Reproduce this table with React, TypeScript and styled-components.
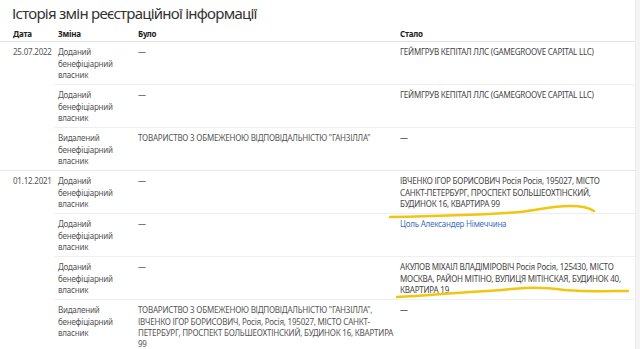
import React from "react";
import styled, { createGlobalStyle } from "styled-components";

const GlobalStyle = createGlobalStyle`
  html, body {
    margin: 0;
    padding: 0;
    background: #fff;
  }
  body {
    font-family: "Noto Sans", "Open Sans", sans-serif;
    color: #555;
    overflow: hidden;
  }
`;

const Page = styled.div`
  display: flex;
  width: 640px;
  height: 349px;
  overflow: hidden;
`;

const Content = styled.div`
  position: relative;
  width: 635px;
  flex-shrink: 0;
`;

const Gutter = styled.div`
  flex: 1;
  background: #f4f4f4;
  border-left: 1px solid #ececec;
`;

const Title = styled.h1`
  margin: 0;
  padding: 3px 12px 0;
  height: 26px;
  box-sizing: border-box;
  font-size: 15px;
  line-height: 20px;
  font-weight: 400;
  letter-spacing: -0.75px;
  color: #333;
`;

const Table = styled.table`
  width: 100%;
  border-collapse: collapse;
  table-layout: fixed;
  font-size: 8px;
  line-height: 11.3px;
  letter-spacing: -0.22px;
`;

const Th = styled.th`
  text-align: left;
  font-weight: 700;
  color: #222;
  padding: 2px 4px 2px;
  height: 11px;
  border-bottom: 1px solid #e3e3e3;
  &:first-child {
    padding-left: 13px;
  }
`;

const DateCell = styled.td`
  vertical-align: top;
  padding: 4px 0 4px 13px;
  white-space: nowrap;
  border-bottom: 1px solid #e8e8e8;
`;

const Td = styled.td<{ $last?: boolean; $dark?: boolean }>`
  vertical-align: top;
  padding: 4px ${({ $dark }) => ($dark ? "12px" : "1px")} 4px 4px;
  color: ${({ $dark }) => ($dark ? "#444" : "#555")};
  border-bottom: 1px solid ${({ $last }) => ($last ? "#e8e8e8" : "#efefef")};
  height: 34px;
`;

const Link = styled.a`
  color: #3d6fc2;
  text-decoration: none;
`;

const Marks = styled.svg`
  position: absolute;
  left: 0;
  top: 0;
  pointer-events: none;

  path {
    fill: none;
    stroke: #f2c511;
    stroke-width: 2.5;
    stroke-linecap: round;
  }
`;

interface Change {
  kind: string;
  before: React.ReactNode;
  after: React.ReactNode;
}

interface Group {
  date: string;
  changes: Change[];
}

const DASH = "—";

const groups: Group[] = [
  {
    date: "25.07.2022",
    changes: [
      { kind: "Доданий бенефіціарний власник", before: DASH, after: "ГЕЙМГРУВ КЕПІТАЛ ЛЛС (GAMEGROOVE CAPITAL LLC)" },
      { kind: "Доданий бенефіціарний власник", before: DASH, after: "ГЕЙМГРУВ КЕПІТАЛ ЛЛС (GAMEGROOVE CAPITAL LLC)" },
      { kind: "Видалений бенефіціарний власник", before: "ТОВАРИСТВО З ОБМЕЖЕНОЮ ВІДПОВІДАЛЬНІСТЮ \"ГАНЗІЛЛА\"", after: DASH },
    ],
  },
  {
    date: "01.12.2021",
    changes: [
      {
        kind: "Доданий бенефіціарний власник",
        before: DASH,
        after: "ІВЧЕНКО ІГОР БОРИСОВИЧ Росія Росія, 195027, МІСТО САНКТ-ПЕТЕРБУРГ, ПРОСПЕКТ БОЛЬШЕОХТІНСКИЙ, БУДИНОК 16, КВАРТИРА 99",
      },
      { kind: "Доданий бенефіціарний власник", before: DASH, after: <Link href="#">Цоль Александер Німеччина</Link> },
      {
        kind: "Доданий бенефіціарний власник",
        before: DASH,
        after: "АКУЛОВ МІХАІЛ ВЛАДІМІРОВІЧ Росія Росія, 125430, МІСТО МОСКВА, РАЙОН МІТІНО, ВУЛИЦЯ МІТІНСКАЯ, БУДИНОК 40, КВАРТИРА 19",
      },
      {
        kind: "Видалений бенефіціарний власник",
        before: "ТОВАРИСТВО З ОБМЕЖЕНОЮ ВІДПОВІДАЛЬНІСТЮ \"ГАНЗІЛЛА\", ІВЧЕНКО ІГОР БОРИСОВИЧ, Росія, Росія, 195027, МІСТО САНКТ-ПЕТЕРБУРГ, ПРОСПЕКТ БОЛЬШЕОХТІНСКИЙ, БУДИНОК 16, КВАРТИРА 99",
        after: DASH,
      },
    ],
  },
];

const App: React.FC = () => {
  return (
    <>
      <GlobalStyle />
      <Page>
        <Content>
          <Title>Історія змін реєстраційної інформації</Title>
          <Table>
            <colgroup>
              <col style={{ width: 54 }} />
              <col style={{ width: 80 }} />
              <col style={{ width: 262 }} />
              <col />
            </colgroup>
            <thead>
              <tr>
                <Th>Дата</Th>
                <Th>Зміна</Th>
                <Th>Було</Th>
                <Th>Стало</Th>
              </tr>
            </thead>
            <tbody>
              {groups.map((g) =>
                g.changes.map((c, i) => {
                  const last = i === g.changes.length - 1;
                  return (
                    <tr key={g.date + i}>
                      {i === 0 && (
                        <DateCell rowSpan={g.changes.length}>{g.date}</DateCell>
                      )}
                      <Td $last={last}>{c.kind}</Td>
                      <Td $last={last}>{c.before}</Td>
                      <Td $last={last} $dark>
                        {c.after}
                      </Td>
                    </tr>
                  );
                })
              )}
            </tbody>
          </Table>
          <Marks width="635" height="349" viewBox="0 0 635 349">
            <path d="M390 217 C 440 216, 490 214, 520 212 C 540 210, 550 206, 570 206 C 583 206, 590 208, 594 211" />
            <path d="M397 297 C 420 296, 440 294, 470 292 C 495 291, 510 289, 525 288 C 540 287, 550 288, 565 290 C 590 292, 610 291, 628 291" />
          </Marks>
        </Content>
        <Gutter />
      </Page>
    </>
  );
};

export default App;
